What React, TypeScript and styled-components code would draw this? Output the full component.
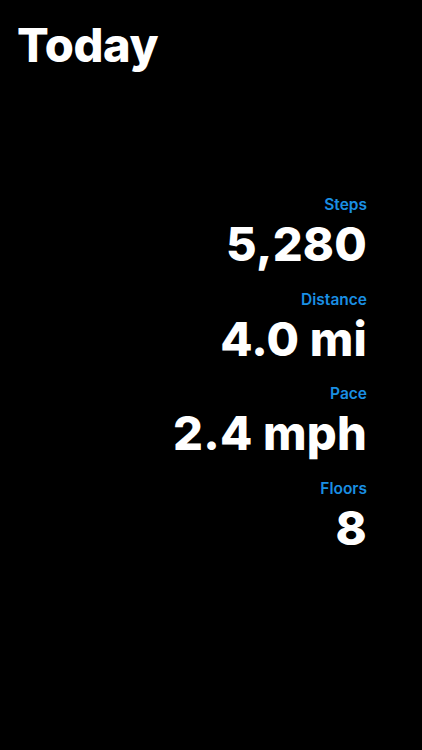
import styled, { createGlobalStyle } from 'styled-components';

const GlobalStyle = createGlobalStyle`
  html, body {
    margin: 0;
    padding: 0;
    background: #000;
  }
  body {
    font-family: Inter, "Noto Sans", "Liberation Sans", sans-serif;
    color: #fff;
  }
`;

interface Stat {
  label: string;
  value: string;
}

const stats: Stat[] = [
  { label: 'Steps', value: '5,280' },
  { label: 'Distance', value: '4.0 mi' },
  { label: 'Pace', value: '2.4 mph' },
  { label: 'Floors', value: '8' },
];

function App() {
  return (
    <>
      <GlobalStyle />
      <Screen>
        <Title>Today</Title>
        <StatsList>
          {stats.map((stat) => (
            <StatItem key={stat.label}>
              <Label>{stat.label}</Label>
              <Value>{stat.value}</Value>
            </StatItem>
          ))}
        </StatsList>
      </Screen>
    </>
  );
}

const Screen = styled.div`
  width: 422px;
  height: 750px;
  background: #000;
  box-sizing: border-box;
  padding: 17px 55px 0 17px;
  display: flex;
  flex-direction: column;
`;

const Title = styled.h1`
  margin: 0;
  font-size: 47px;
  font-weight: 800;
  letter-spacing: -0.4px;
  line-height: 56px;
`;

const StatsList = styled.div`
  margin-top: 122px;
  display: flex;
  flex-direction: column;
  align-items: flex-end;
  gap: 16.5px;
`;

const StatItem = styled.div`
  display: flex;
  flex-direction: column;
  align-items: flex-end;
`;

const Label = styled.div`
  color: #1a8fe3;
  font-size: 15.5px;
  font-weight: 600;
  line-height: 20px;
`;

const Value = styled.div`
  font-size: 47px;
  font-weight: 800;
  line-height: 58px;
  letter-spacing: 0.2px;
`;

export default App;
